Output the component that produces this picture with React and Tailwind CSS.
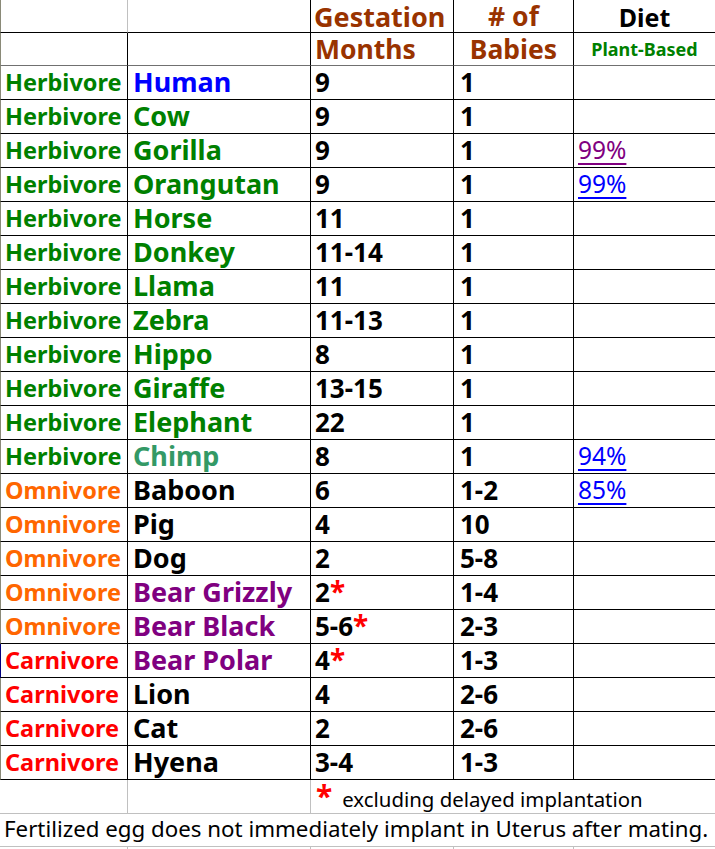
import React from "react";

const GREEN = "text-[#008000]";
const ORANGE = "text-[#ff6600]";
const RED = "text-[#ff0000]";
const PURPLE = "text-[#800080]";

const animals = [
  { type: "Herbivore", typeColor: GREEN, name: "Human", nameColor: "text-[#0000ff]", months: "9", babies: "1" },
  { type: "Herbivore", typeColor: GREEN, name: "Cow", nameColor: GREEN, months: "9", babies: "1" },
  { type: "Herbivore", typeColor: GREEN, name: "Gorilla", nameColor: GREEN, months: "9", babies: "1", diet: "99%", visited: true },
  { type: "Herbivore", typeColor: GREEN, name: "Orangutan", nameColor: GREEN, months: "9", babies: "1", diet: "99%" },
  { type: "Herbivore", typeColor: GREEN, name: "Horse", nameColor: GREEN, months: "11", babies: "1" },
  { type: "Herbivore", typeColor: GREEN, name: "Donkey", nameColor: GREEN, months: "11-14", babies: "1" },
  { type: "Herbivore", typeColor: GREEN, name: "Llama", nameColor: GREEN, months: "11", babies: "1" },
  { type: "Herbivore", typeColor: GREEN, name: "Zebra", nameColor: GREEN, months: "11-13", babies: "1" },
  { type: "Herbivore", typeColor: GREEN, name: "Hippo", nameColor: GREEN, months: "8", babies: "1" },
  { type: "Herbivore", typeColor: GREEN, name: "Giraffe", nameColor: GREEN, months: "13-15", babies: "1" },
  { type: "Herbivore", typeColor: GREEN, name: "Elephant", nameColor: GREEN, months: "22", babies: "1" },
  { type: "Herbivore", typeColor: GREEN, name: "Chimp", nameColor: "text-[#339966]", months: "8", babies: "1", diet: "94%" },
  { type: "Omnivore", typeColor: ORANGE, name: "Baboon", nameColor: "text-black", months: "6", babies: "1-2", diet: "85%" },
  { type: "Omnivore", typeColor: ORANGE, name: "Pig", nameColor: "text-black", months: "4", babies: "10" },
  { type: "Omnivore", typeColor: ORANGE, name: "Dog", nameColor: "text-black", months: "2", babies: "5-8" },
  { type: "Omnivore", typeColor: ORANGE, name: "Bear Grizzly", nameColor: PURPLE, months: "2", star: true, babies: "1-4" },
  { type: "Omnivore", typeColor: ORANGE, name: "Bear Black", nameColor: PURPLE, months: "5-6", star: true, babies: "2-3" },
  { type: "Carnivore", typeColor: RED, name: "Bear Polar", nameColor: PURPLE, months: "4", star: true, babies: "1-3", mark: true },
  { type: "Carnivore", typeColor: RED, name: "Lion", nameColor: "text-black", months: "4", babies: "2-6" },
  { type: "Carnivore", typeColor: RED, name: "Cat", nameColor: "text-black", months: "2", babies: "2-6" },
  { type: "Carnivore", typeColor: RED, name: "Hyena", nameColor: "text-black", months: "3-4", babies: "1-3" },
];

// spreadsheet-ish cell: bottom/right gridlines, text sits low in the row
const cell = "h-[34px] border-b border-r border-black font-bold whitespace-nowrap leading-none";

export default function App() {
  return (
    <div
      className="w-[715px] h-[849px] overflow-hidden bg-white"
      style={{ fontFamily: "Tahoma, 'Noto Sans', 'DejaVu Sans', sans-serif" }}
    >
      <div className="grid grid-cols-[128px_183px_143px_120px_141px]">
        {/* header row 1 */}
        <div className="h-[33px] border-l border-l-[#8a8a78] border-b border-b-black border-r border-r-[#c0c0c0]" />
        <div className="h-[33px] border-b border-r border-black" />
        <div className="h-[33px] border-b border-r border-black pl-[3px] pt-[3px] font-bold text-[27px] leading-none text-[#993300] whitespace-nowrap">
          Gestation
        </div>
        <div className="h-[33px] border-b border-r border-black pt-[3px] text-center font-bold text-[26.5px] leading-none text-[#993300]">
          # of
        </div>
        <div className="h-[33px] border-b border-black pt-[5px] text-center font-bold text-[25px] leading-none text-black">
          Diet
        </div>

        {/* header row 2 */}
        <div className="h-[33px] border-l border-l-[#8a8a78] border-b border-b-[#707070] border-r border-r-black" />
        <div className="h-[33px] border-b border-b-[#707070] border-r border-r-black" />
        <div className="h-[33px] border-b border-b-[#707070] border-r border-r-black pl-[4px] pt-[3px] font-bold text-[26.5px] leading-none text-[#993300]">
          Months
        </div>
        <div className="h-[33px] border-b border-b-[#707070] border-r border-r-black pt-[3px] text-center font-bold text-[26.5px] leading-none text-[#993300]">
          Babies
        </div>
        <div className="h-[33px] border-b border-b-[#707070] pt-[7px] text-center font-bold text-[18px] leading-none text-[#008000] whitespace-nowrap">
          Plant-Based
        </div>

        {animals.map((a) => (
          <React.Fragment key={a.name}>
            <div
              className={`${cell} border-l pl-[4px] pt-[5px] text-[23.5px] ${a.typeColor} ${
                a.mark ? "border-l-[#000080]" : "border-l-[#8a8a78]"
              }`}
            >
              {a.type}
            </div>
            <div className={`${cell} pl-[5px] pt-[2px] text-[27px] ${a.nameColor}`}>{a.name}</div>
            <div className={`${cell} pl-[4px] pt-[3px] text-[26px] text-black`}>
              {a.months}
              {a.star && <span className="text-[#ff0000] text-[28px] leading-[0px]">*</span>}
            </div>
            <div className={`${cell} pl-[6px] pt-[3px] text-[26px] text-black`}>{a.babies}</div>
            <div className="h-[34px] border-b border-black pl-[4px] pt-[4px] text-[24.5px] leading-none">
              {a.diet && (
                <span
                  className={`underline decoration-2 underline-offset-[4px] ${
                    a.visited ? "text-[#800080]" : "text-[#0000ff]"
                  }`}
                >
                  {a.diet}
                </span>
              )}
            </div>
          </React.Fragment>
        ))}

        {/* footnote rows */}
        <div className="h-[34px] border-b border-r border-[#c0c0c0]" />
        <div className="h-[34px] border-b border-r border-[#c0c0c0]" />
        <div className="col-span-3 h-[34px] border-b border-[#c0c0c0] pl-[5px] pt-[9px] whitespace-nowrap text-[20.4px] leading-none text-black">
          <span className="font-bold text-[30px] leading-[0px] text-[#ff0000] mr-[10px]">*</span>
          excluding delayed implantation
        </div>

        <div className="col-span-5 h-[33px] border-b border-[#c0c0c0] pl-[4px] pt-[4px] whitespace-nowrap text-[22.3px] leading-none text-black">
          Fertilized egg does not immediately implant in Uterus after mating.
        </div>

        <div className="h-[4px] border-r border-[#c0c0c0]" />
        <div className="h-[4px] border-r border-[#c0c0c0]" />
        <div className="h-[4px] border-r border-[#c0c0c0]" />
        <div className="h-[4px] border-r border-[#c0c0c0]" />
        <div className="h-[4px]" />
      </div>
    </div>
  );
}
